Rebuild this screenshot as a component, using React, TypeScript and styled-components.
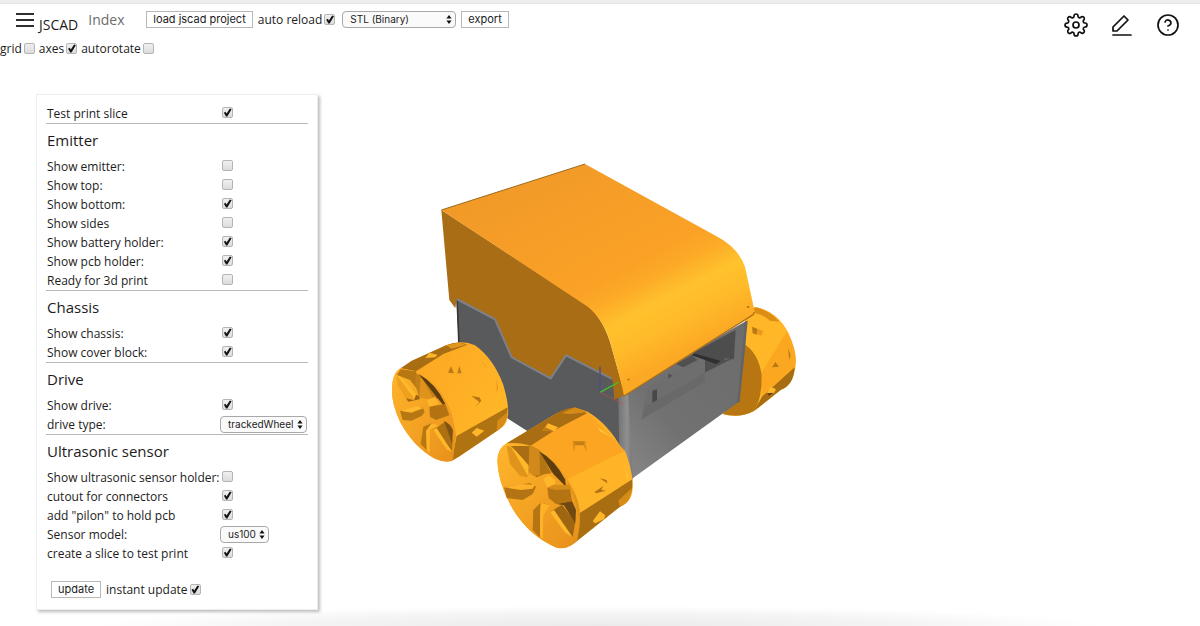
import React, { useId } from 'react';
import styled, { createGlobalStyle } from 'styled-components';
import { FiHelpCircle, FiSettings } from 'react-icons/fi';

const GlobalStyle = createGlobalStyle`
  *, *::before, *::after { box-sizing: border-box; }
  body {
    margin: 0;
    background: #fff;
    color: #1c1c1c;
    font: 12px/19px "Open Sans", "Noto Sans", sans-serif;
  }
  input, select, button { margin: 0; font: inherit; color: inherit; }
`;

const Page = styled.div`
  display: flex;
  flex-direction: column;
  min-height: 100vh;
  border-top: 3px solid #eeeeee;
  background: radial-gradient(ellipse 42% 20px at 50% 100%, #ebebeb, #f4f4f4 60%, #fff) no-repeat;
`;

const Header = styled.header`
  display: flex;
  justify-content: space-between;
  align-items: flex-start;
  border-top: 1px solid #e2e2e2;
  padding: 6px 20px 0 16px;
`;

const Toolbar = styled.div`
  display: flex;
  align-items: flex-start;
`;

const MenuButton = styled.button`
  display: flex;
  flex-direction: column;
  gap: 4px;
  width: 18px;
  margin: 3px 5px 0 0;
  padding: 0;
  border: 0;
  background: none;
`;

const MenuBar = styled.span`
  height: 2px;
  background: #2e2e2e;
`;

const Brand = styled.h1`
  margin: 5px 10px 0 0;
  font-size: 14px;
  font-weight: 400;
  line-height: 20px;
`;

const IndexLink = styled.a`
  width: 58px;
  color: #6c6c6c;
  font-size: 14px;
  line-height: 19px;
  text-decoration: none;
`;

const Actions = styled.div`
  display: flex;
  align-items: center;
  gap: 5px;
`;

const PlainButton = styled.button`
  height: 17px;
  padding: 0 6px;
  border: 1px solid #b9b9b9;
  background: #fff;
  font: 11px/15px Inter, sans-serif;
`;

const CheckLabel = styled.label`
  display: inline-flex;
  align-items: center;
  gap: 2px;
`;

const Tick = styled.input.attrs({ type: 'checkbox' })`
  appearance: none;
  flex: none;
  display: grid;
  place-items: center;
  width: 11px;
  height: 11px;
  border: 1px solid #b4b4b4;
  border-radius: 2px;
  background: linear-gradient(#f0f0f0, #dcdcdc);

  &:checked::before {
    content: "";
    width: 9px;
    height: 9px;
    background: #151515;
    clip-path: polygon(10% 52%, 27% 42%, 40% 62%, 76% 6%, 96% 14%, 48% 94%, 34% 94%);
  }
`;

const SelectBox = styled.span<{ $wide?: boolean }>`
  display: inline-grid;
  align-items: center;
  width: ${(p) => (p.$wide ? '114px' : 'max-content')};
  margin: ${(p) => (p.$wide ? '0 0 0 2px' : '0')};

  select, svg { grid-area: 1 / 1; }
  svg { justify-self: end; margin-right: 4px; pointer-events: none; }
`;

const SelectField = styled.select`
  appearance: none;
  width: 100%;
  height: 17px;
  padding: 0 12px 0 7px;
  border: 1px solid #a9a9a9;
  border-radius: 4px;
  background: #fafafa;
  font: 10px/15px Inter, sans-serif;
`;

const IconBar = styled.nav`
  display: flex;
  gap: 22px;
  padding-top: 3px;
`;

const IconButton = styled.button`
  display: flex;
  padding: 0;
  border: 0;
  background: none;
  color: #111;

  svg { stroke-width: 1.7; }
`;

const ViewOptions = styled.div`
  display: flex;
  gap: 4px;
  padding-top: 2px;
`;

const Main = styled.main`
  display: flex;
  align-items: flex-start;
  padding: 36px 0 16px 36px;
`;

const Panel = styled.form`
  flex: none;
  width: 282px;
  padding: 9px 9px 10px;
  border: 1px solid #eeeeee;
  background: #fff;
  box-shadow: 2px 2px 3px #bdbdbd;
`;

const Section = styled.section`
  width: 262px;
  padding-left: 1px;
  border-bottom: 1px solid #b8b8b8;

  &:last-of-type { border-bottom: 0; }
`;

const SectionTitle = styled.h2`
  margin: 0;
  padding: 6px 0;
  font-size: 15px;
  font-weight: 400;
  line-height: 21px;
`;

const Row = styled.div`
  display: grid;
  grid-template-columns: 173px 1fr;
  align-items: center;
  height: 19px;
  white-space: nowrap;

  ${Tick} { margin: 0 0 2px 2px; }
`;

const PanelFooter = styled.div`
  display: flex;
  align-items: center;
  gap: 5px;
  padding: 17px 0 0 5px;
`;

const Viewer = styled.div`
  flex: 1;
  padding: 69px 0 0 73px;
`;

const Scene = styled.svg`
  display: block;
  width: 406px;
  height: auto;
`;

function Dropdown({ id, label, value, wide }: { id?: string; label?: string; value: string; wide?: boolean }) {
  return (
    <SelectBox $wide={wide}>
      <SelectField id={id} aria-label={label} defaultValue={value}>
        <option>{value}</option>
      </SelectField>
      <svg width="6" height="9" viewBox="0 0 6 9" aria-hidden="true">
        <path d="M3 0 5.6 3.6H.4zM3 9 .4 5.4h5.2z" fill="#111" />
      </svg>
    </SelectBox>
  );
}

type Param = { label: string; on?: boolean; choice?: string };

const sections: { title?: string; params: Param[] }[] = [
  { params: [{ label: 'Test print slice', on: true }] },
  {
    title: 'Emitter',
    params: [
      { label: 'Show emitter:' },
      { label: 'Show top:' },
      { label: 'Show bottom:', on: true },
      { label: 'Show sides' },
      { label: 'Show battery holder:', on: true },
      { label: 'Show pcb holder:', on: true },
      { label: 'Ready for 3d print' },
    ],
  },
  {
    title: 'Chassis',
    params: [
      { label: 'Show chassis:', on: true },
      { label: 'Show cover block:', on: true },
    ],
  },
  {
    title: 'Drive',
    params: [
      { label: 'Show drive:', on: true },
      { label: 'drive type:', choice: 'trackedWheel' },
    ],
  },
  {
    title: 'Ultrasonic sensor',
    params: [
      { label: 'Show ultrasonic sensor holder:' },
      { label: 'cutout for connectors', on: true },
      { label: 'add "pilon" to hold pcb', on: true },
      { label: 'Sensor model:', choice: 'us100' },
      { label: 'create a slice to test print', on: true },
    ],
  },
];

function ParamRow({ label, on, choice }: Param) {
  const id = useId();
  return (
    <Row>
      <label htmlFor={id}>{label}</label>
      {choice ? <Dropdown id={id} value={choice} /> : <Tick id={id} defaultChecked={on} />}
    </Row>
  );
}

function Rover() {
  return (
    <Scene viewBox="0 0 1218 1161" role="img" aria-label="Rover model">
      <defs>
        <linearGradient id="hood" gradientUnits="userSpaceOnUse" x1="93" y1="177" x2="418" y2="796">
          <stop offset="0" stopColor="#f19a28" />
          <stop offset=".55" stopColor="#fba126" />
          <stop offset=".64" stopColor="#fcaa27" />
          <stop offset=".75" stopColor="#ffc22c" />
          <stop offset=".86" stopColor="#ffba29" />
          <stop offset="1" stopColor="#fba824" />
        </linearGradient>
        <linearGradient id="front" x1="0" y1="1" x2="1" y2="0">
          <stop offset="0" stopColor="#8b8b8b" />
          <stop offset=".4" stopColor="#717171" />
          <stop offset="1" stopColor="#6c6c6c" />
        </linearGradient>
        <linearGradient id="corner" x1="0" x2="1">
          <stop offset="0" stopColor="#5a5a5a" />
          <stop offset=".75" stopColor="#8f8f8f" />
          <stop offset="1" stopColor="#777" />
        </linearGradient>
        <linearGradient id="hub" x1="0" y1="0" x2="1" y2="1">
          <stop offset="0" stopColor="#ffb52b" />
          <stop offset="1" stopColor="#e8901b" />
        </linearGradient>
        <linearGradient id="tread" x1="0" y1="0" x2="1" y2=".6">
          <stop offset="0" stopColor="#fca322" />
          <stop offset="1" stopColor="#ffb727" />
        </linearGradient>
      </defs>

      {/* rear right wheel and front face */}
      <g transform="translate(597 381)">
        <path d="M470 62 497 52Q560 62 596 130 630 205 610 258 598 292 572 300L500 358Q455 388 398 372L430 300Z" fill="#ffb727" />
        <path d="M478 55 500 52Q545 66 568 95L540 92Q520 72 478 66Z" fill="#db8d14" />
        <path d="M514 248 590 125Q628 190 613 238L515 325Z" fill="#fba820" />
        <path d="M516 320 614 232Q612 285 572 300L492 363Z" fill="#a66d12" />
        <path d="M462 162Q505 188 515 255 517 325 492 363 450 386 398 372L440 330Z" fill="#b77611" />
        <path d="M486 110 502 116 500 134 488 130ZM546 232 556 216 567 230ZM594 175l8 20-4 16z" fill="#b87914" />
        <path d="M502 116l17 7-5 14-14-5z" fill="#e9991d" />
        <path d="M530 310 542 290 558 298 552 310 538 318Z" fill="#ffb82b" />
        <path d="M530 310l22-2-14 10z" fill="#5e3d0c" />
        <path d="M60 325 470 92 465 180 447 335 125 567 105 520 60 410Z" fill="url(#front)" />
        <path d="M62 325 115 308 128 570 60 420Z" fill="url(#corner)" />
        <path d="M465 96 473 92 449 335 441 340Z" fill="#626466" />
        <path d="M310 188 437 120 432 208 408 205 345 247 345 205Z" fill="#4d4d4d" />
        <path d="M345 205 402 210 430 205 346 247Z" fill="#505050" />
        <path d="M312 190 393 213 378 222 305 196Z" fill="#303030" />
        <path d="M258 222 305 196 323 210 280 232Z" fill="#505050" />
        <path d="M170 295 240 250 280 232 345 210 345 275 155 388Z" fill="#6e6e6e" />
        <path d="M187 302 201 298 201 340 187 347Z" fill="#484848" />
        <path d="M235 250 247 257 235 266Z" fill="#505050" />
        <path d="M155 388 166 350 346 248 345 275Z" fill="#696969" />
      </g>

      {/* chassis side and hood */}
      <g transform="translate(117 -39)">
        <path d="M79 447 195 508 245 622 362 685 408 617 548 688 565 745 570 1020 234 806 92 680Z" fill="#595a5c" />
        <path d="M79 447 85 600 90 600 84 452Z" fill="#343638" />
        <path d="M34 180 470 465Q515 500 540 575L585 736 553 749 548 690 408 617 362 686 245 622 195 510 80 447 76 475 58 450Z" fill="#a96d16" />
        <path d="M80 447 195 508 245 622 362 685 408 616 545 686" fill="none" stroke="#7d8187" strokeWidth="6" />
        <path d="M34 180 465 42 865 262Q925 295 945 350L974 485Q974 490 966 496L582 738Q573 690 540 575 515 500 470 468Z" fill="url(#hood)" />
        <path d="M34 180 465 42" fill="none" stroke="#9a6b20" strokeWidth="3" />
        <path d="M582 738 970 494 973 487" fill="none" stroke="#a96f19" strokeWidth="4" />
        <path d="M592 686h7v5h-7zM951 468h7v5h-7z" fill="#b4751a" />
        <path d="M510 650V727" stroke="#4b4c8c" strokeWidth="4" />
        <path d="M510 727 567 696" stroke="#43c32b" strokeWidth="4" />
        <path d="M510 727 580 763" stroke="#bb5045" strokeWidth="2" />
      </g>

      {/* rear left wheel */}
      <g transform="translate(-33 501)">
        <path d="M36 175Q36 135 62 115L198 46Q245 28 285 46 340 85 370 165 392 240 381 268 380 285 355 300L225 388Q200 400 165 386 100 350 60 275 34 220 36 175Z" fill="url(#tread)" />
        <path d="M62 115 95 92 198 46Q225 35 245 38L262 44 190 72 108 124Z" fill="#a96e13" />
        <path d="M198 46 240 37 258 44 215 56Z" fill="#e1951d" />
        <path d="M215 392 230 318 383 232Q384 280 355 300L240 378Z" fill="#b07312" />
        <path d="M352 272 381 248Q380 288 350 302Z" fill="#d98b17" />
        <path d="M108 124Q165 145 196 210 218 240 228 320L218 392Q195 400 165 386 100 350 60 275 34 220 36 175 38 125 62 115Z" fill="url(#hub)" />
        <path d="M62 118 108 124 125 195 90 150 50 135Z" fill="#b77813" />
        <path d="M50 135 107 195 102 211 78 205 52 165Z" fill="#efa01f" />
        <path d="M50 135 62 140 108 192 104 207Z" fill="#ffba2b" />
        <path d="M78 205 102 211 108 194 122 200 118 208 85 215Z" fill="#9d6512" />
        <path d="M108 130 142 150 176 196 180 206 148 206 118 203 105 160Z" fill="#c17f17" />
        <path d="M122 138 158 200 148 207 118 203Z" fill="#e0931c" />
        <path d="M116 132Q168 160 196 222L190 226 165 195Z" fill="#5f3d0c" />
        <path d="M60 242 105 232 128 232 134 246 125 258 94 272 68 270Z" fill="#b77713" />
        <path d="M60 242 110 229 131 234 94 248Z" fill="#ffb82b" />
        <path d="M148 230 196 222 208 256 168 270 150 260Z" fill="#b37313" />
        <path d="M140 210 165 200 176 222 148 230Z" fill="#ffb52a" />
        <path d="M130 290 155 280 172 286 147 302 145 365 122 342Z" fill="#b77813" />
        <path d="M155 280 176 286 150 300 149 368 140 362 138 302Z" fill="#ffb328" />
        <path d="M160 300 194 276 218 330 216 362Z" fill="#ad7012" />
        <path d="M160 300 170 294 216 365 200 358Z" fill="#ffb82a" />
        <path d="M192 272Q213 282 219 302L216 340Z" fill="#805311" />
        <path d="M136 84 148 68 172 74 166 82Z" fill="#ffb62a" />
        <path d="M204 128 213 108 222 130ZM232 130 238 108 245 130Z" fill="#bd7c15" />
        <path d="M274 198 298 202 304 212 284 234 298 216Z" fill="#b57614" />
        <path d="M275 308 290 294 313 302 290 320Z" fill="#ffb62b" />
        <path d="M300 88 318 108 322 116zM350 145 354 175l-4 12z" fill="#dd941c" />
      </g>

      {/* front wheel */}
      <g transform="translate(297 711)">
        <path d="M22 182Q22 145 50 130L200 40Q245 18 290 34 355 70 400 155 435 235 427 275 424 305 390 320L262 422Q235 448 200 443 120 410 70 330 24 250 22 182Z" fill="url(#tread)" />
        <path d="M50 130 200 40Q235 20 260 24L292 40 200 88 118 140Z" fill="#a96e13" />
        <path d="M215 40 255 22 295 36 240 42Z" fill="#d68b18" />
        <path d="M200 88 292 40 405 152 228 240 180 170 118 140Z" fill="#fca522" />
        <path d="M228 240 405 152Q424 200 427 240L268 340Z" fill="#ffb427" />
        <path d="M268 340 427 238Q430 300 390 320L262 422 240 438Z" fill="#a96e12" />
        <path d="M385 302 425 265Q424 308 390 320Z" fill="#d88c18" />
        <path d="M50 130Q160 120 225 225 270 290 270 350 270 420 240 438 225 448 200 443 120 410 70 330 24 250 22 182 25 145 50 130Z" fill="url(#hub)" />
        <path d="M62 138 118 138 118 198 95 172Z" fill="#a96e13" />
        <path d="M50 138 62 140 118 218 112 232 90 228 60 192Z" fill="#e0941b" />
        <path d="M62 138 80 156 119 204 113 226Z" fill="#ffba2b" />
        <path d="M118 135 148 150 184 220 164 222 140 232 116 215Z" fill="#b37413" />
        <path d="M118 135 148 150 150 225 130 228 116 215Z" fill="#d0891a" />
        <path d="M148 154Q195 180 225 238L228 260 192 224 184 214Z" fill="#5f3d0c" />
        <path d="M42 262 78 254 120 250 138 260 128 282 98 300 50 294Z" fill="#b47413" />
        <path d="M42 262 88 252 134 254 128 266 92 270Z" fill="#fdb12a" />
        <path d="M160 238 175 226 196 240 196 252 172 262Z" fill="#ffb629" />
        <path d="M172 264 238 254 246 304 198 312 176 294Z" fill="#b47413" />
        <path d="M172 264 192 254 238 256 242 268 196 270Z" fill="#d58c19" />
        <path d="M130 330 152 308 176 314 158 344 155 418 128 390Z" fill="#b57513" />
        <path d="M152 308 180 316 160 344 158 418 150 412 150 340Z" fill="#ffb228" />
        <path d="M180 336 216 314 256 365 248 412Z" fill="#9f6611" />
        <path d="M180 336 192 330 248 412 226 398Z" fill="#ffb92b" />
        <path d="M200 312 246 304 258 330 256 370 222 316Z" fill="#704811" />
        <path d="M228 240Q274 300 268 350 268 415 240 438L262 422Q280 330 228 240Z" fill="#dc941b" />
        <path d="M158 92 174 70 204 82 192 94Z" fill="#ffb62a" />
        <path d="M158 92l8-10 26 12z" fill="#bd7c15" />
        <path d="M248 124h38l-6 12h-24z" fill="#c27f16" />
        <path d="M248 124l8 12-5 22zM286 124l-6 12 11 22z" fill="#d8901b" />
        <path d="M328 234 350 240 352 250ZM314 276 340 258 334 270 348 272 318 280Z" fill="#b37314" />
        <path d="M308 364 330 334 346 346 342 358 316 370Z" fill="#ffb62b" />
        <path d="M322 80 365 112 330 94ZM404 192 416 240 410 232Z" fill="#ffc63a" />
      </g>
    </Scene>
  );
}

export default function App() {
  return (
    <>
      <GlobalStyle />
      <Page>
        <Header>
          <Toolbar>
            <MenuButton type="button" aria-label="Menu">
              <MenuBar />
              <MenuBar />
              <MenuBar />
            </MenuButton>
            <Brand>JSCAD</Brand>
            <IndexLink href="#index">Index</IndexLink>
            <Actions>
              <PlainButton type="button">load jscad project</PlainButton>
              <CheckLabel>
                auto reload
                <Tick defaultChecked />
              </CheckLabel>
              <Dropdown label="Export format" value="STL (Binary)" wide />
              <PlainButton type="button">export</PlainButton>
            </Actions>
          </Toolbar>
          <IconBar aria-label="Tools">
            <IconButton type="button" aria-label="Settings">
              <FiSettings size={24} />
            </IconButton>
            <IconButton type="button" aria-label="Editor">
              <svg width="24" height="24" viewBox="0 0 24 24" fill="none" stroke="currentColor" strokeLinecap="round" strokeLinejoin="round">
                <path d="M14 3 18 7 7 18H3v-4zM3 22h18" />
              </svg>
            </IconButton>
            <IconButton type="button" aria-label="Help">
              <FiHelpCircle size={24} />
            </IconButton>
          </IconBar>
        </Header>
        <ViewOptions>
          <CheckLabel>
            grid
            <Tick />
          </CheckLabel>
          <CheckLabel>
            axes
            <Tick defaultChecked />
          </CheckLabel>
          <CheckLabel>
            autorotate
            <Tick />
          </CheckLabel>
        </ViewOptions>
        <Main>
          <Panel>
            {sections.map((section) => (
              <Section key={section.params[0].label}>
                {section.title && <SectionTitle>{section.title}</SectionTitle>}
                {section.params.map((param) => (
                  <ParamRow key={param.label} {...param} />
                ))}
              </Section>
            ))}
            <PanelFooter>
              <PlainButton type="button">update</PlainButton>
              <CheckLabel>
                instant update
                <Tick defaultChecked />
              </CheckLabel>
            </PanelFooter>
          </Panel>
          <Viewer>
            <Rover />
          </Viewer>
        </Main>
      </Page>
    </>
  );
}
